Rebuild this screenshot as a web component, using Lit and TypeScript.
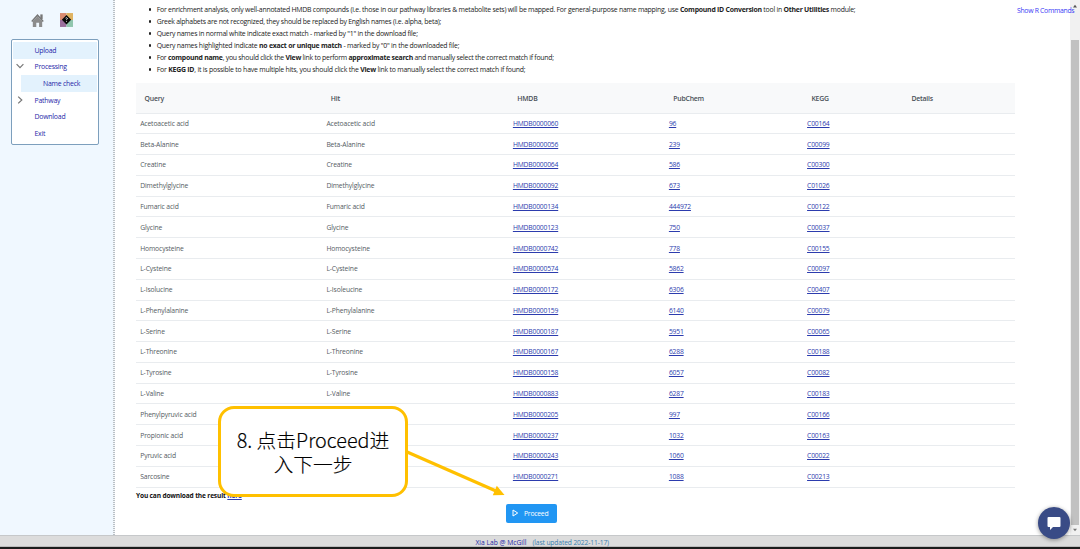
import { LitElement, html, css, svg } from 'lit';
import { customElement } from 'lit/decorators.js';

const ROWS: string[][] = [
  ['Acetoacetic acid', 'Acetoacetic acid', 'HMDB0000060', '96', 'C00164'],
  ['Beta-Alanine', 'Beta-Alanine', 'HMDB0000056', '239', 'C00099'],
  ['Creatine', 'Creatine', 'HMDB0000064', '586', 'C00300'],
  ['Dimethylglycine', 'Dimethylglycine', 'HMDB0000092', '673', 'C01026'],
  ['Fumaric acid', 'Fumaric acid', 'HMDB0000134', '444972', 'C00122'],
  ['Glycine', 'Glycine', 'HMDB0000123', '750', 'C00037'],
  ['Homocysteine', 'Homocysteine', 'HMDB0000742', '778', 'C00155'],
  ['L-Cysteine', 'L-Cysteine', 'HMDB0000574', '5862', 'C00097'],
  ['L-Isolucine', 'L-Isoleucine', 'HMDB0000172', '6306', 'C00407'],
  ['L-Phenylalanine', 'L-Phenylalanine', 'HMDB0000159', '6140', 'C00079'],
  ['L-Serine', 'L-Serine', 'HMDB0000187', '5951', 'C00065'],
  ['L-Threonine', 'L-Threonine', 'HMDB0000167', '6288', 'C00188'],
  ['L-Tyrosine', 'L-Tyrosine', 'HMDB0000158', '6057', 'C00082'],
  ['L-Valine', 'L-Valine', 'HMDB0000883', '6287', 'C00183'],
  ['Phenylpyruvic acid', 'Phenylpyruvic acid', 'HMDB0000205', '997', 'C00166'],
  ['Propionic acid', 'Propionic acid', 'HMDB0000237', '1032', 'C00163'],
  ['Pyruvic acid', 'Pyruvic acid', 'HMDB0000243', '1060', 'C00022'],
  ['Sarcosine', 'Sarcosine', 'HMDB0000271', '1088', 'C00213'],
];

const chevron = (d: string) =>
  html`<svg class="chev" viewBox="0 0 8 8">${svg`<path d=${d} fill="none" stroke="#777" stroke-width="1.2"/>`}</svg>`;

@customElement('side-nav')
class SideNav extends LitElement {
  static styles = css`
    :host { display: block; width: 113px; box-sizing: border-box; flex: none; background: #f0f8ff; }
    .icons { display: flex; gap: 15px; padding: 13px 0 0 30px; height: 26px; align-items: flex-start; }
    .icons svg { display: block; }
    .home { width: 15px; height: 15px; }
    .logo { width: 13px; height: 14px; }
    .menu { margin: 0 0 0 10.500px; width: 88px; height: 106px; box-sizing: border-box; border: 1px solid #7d9fbd; border-radius: 2px; background: #fff; padding: 2px 1px 0; }
    .item { height: 16.600px; display: flex; align-items: center; color: #2626a8; font-size: 6.900px; letter-spacing: -0.220px; }
    .slot { width: 22px; display: flex; flex: none; padding-left: 4px; box-sizing: border-box; }
    .chev { width: 8px; height: 8px; display: block; margin-left: -1px; margin-top: -1px; }
    .sel { background: #e3f2fd; }
    .sub { margin-left: 8px; }
    .sub .slot { width: 22.500px; }
  `;
  render() {
    return html`
      <div class="icons">
        <svg class="home" viewBox="0 0 15 16">
          <path d="M10.500 1.500h2.500v5h-2.500z" fill="#777" />
          <path d="M7.500 1L.8 8.400l1.100 1.100 5.600-5.800 5.600 5.800 1.100-1.100z" fill="#777" />
          <path d="M2.500 8.800L7.500 3.800l5 5V15H9.200v-4.500H6.200V15H2.500z" fill="#8c8c8c" />
        </svg>
        <svg class="logo" viewBox="0 0 14 15">
          <path d="M0 0h7v7.500H0z" fill="#d98b70" />
          <path d="M7 0h7v7.500H7z" fill="#dfb362" />
          <path d="M0 7.500h7V15H0z" fill="#9b6f9d" />
          <path d="M7 7.500h7V15H7z" fill="#90c6ae" />
          <path d="M7 2l5 5.200-5 5.200L2 7.200z" fill="#080808" />
          <path d="M6 5.500q1.200-1 1.800 0t-.8 1.600v.5M7 8.600v.8" fill="none" stroke="#fff" stroke-width=".9" />
        </svg>
      </div>
      <div class="menu">
        <div class="item sel"><span class="slot"></span>Upload</div>
        <div class="item"><span class="slot">${chevron('M.6 2.200L4 5.600 7.400 2.200')}</span>Processing</div>
        <div class="item sel sub"><span class="slot"></span>Name check</div>
        <div class="item"><span class="slot">${chevron('M2.200.6L5.800 4 2.200 7.400')}</span>Pathway</div>
        <div class="item"><span class="slot"></span>Download</div>
        <div class="item"><span class="slot"></span>Exit</div>
      </div>
    `;
  }
}

@customElement('result-table')
class ResultTable extends LitElement {
  static styles = css`
    :host { display: block; width: 879px; }
    .row { display: grid; grid-template-columns: 186.200px 186.500px 156px 138.200px 100px 1fr; align-items: center; height: 20.790px; box-sizing: border-box; border-bottom: 1px solid #e9ecef; color: #545b62; font-size: 6.750px; letter-spacing: -0.120px; }
    .row > * { padding-left: 4.200px; white-space: nowrap; }
    .head { height: 30.500px; background: #f8f9fa; font-weight: 600; color: #495057; font-size: 6.900px; padding-top: 2px; letter-spacing: -0.200px; }
    .head > * { padding-left: 8.500px; }
    a { color: #2c3cae; letter-spacing: -0.180px; text-decoration: underline; text-underline-offset: 1px; text-decoration-thickness: 1px; }
  `;
  render() {
    return html`
      <div class="row head">
        ${['Query', 'Hit', 'HMDB', 'PubChem', 'KEGG', 'Details'].map((h) => html`<span>${h}</span>`)}
      </div>
      ${ROWS.map(
        (r) => html`<div class="row">
          <span>${r[0]}</span><span>${r[1]}</span>
          ${r.slice(2).map((v) => html`<span><a>${v}</a></span>`)}
        </div>`,
      )}
    `;
  }
}

@customElement('app-root')
class AppRoot extends LitElement {
  static styles = css`
    :host { display: flex; flex-direction: column; position: relative; width: 1080px; height: 549px; overflow: hidden; background: #fff; font-family: 'Open Sans', 'Noto Sans', sans-serif; font-size: 7px; color: #222; }
    .body { display: flex; height: 535px; }
    .split { width: 2px; flex: none; background: repeating-linear-gradient(#b9c0c6 0 1px, #f4f7fa 1px 2px); }
    main { flex: 1; display: flex; flex-direction: column; padding-left: 21px; min-width: 0; }
    .top { display: flex; justify-content: space-between; height: 83px; }
    ul { margin: 0; padding: 3.500px 0 0 20.700px; list-style: none; }
    li { height: 12.020px; line-height: 12px; font-size: 6.900px; letter-spacing: -0.236px; white-space: nowrap; display: flex; align-items: center; }
    li:nth-child(4) { letter-spacing: -0.224px; }
    li:nth-child(5) { letter-spacing: -0.252px; }
    li:nth-child(6) { letter-spacing: -0.210px; }
    li::before { content: ''; width: 2.600px; height: 2.600px; border-radius: 50%; background: #222; margin-left: -8px; margin-right: 5.400px; flex: none; }
    .cmd { color: #3a3af5; font-size: 6.900px; letter-spacing: -0.320px; line-height: 12px; padding-top: 4.500px; width: 53px; white-space: nowrap; z-index: 1; }
    .dl { font-weight: 700; font-size: 6.600px; letter-spacing: -0.160px; line-height: 11px; margin-top: 2px; height: 12px; color: #111; }
    .dl a { color: #2c3cae; text-decoration: underline; }
    .btn { width: 51px; height: 19px; margin: 2px 0 0 370px; background: #2196f3; border-radius: 2px; display: flex; align-items: center; color: #fff; font-size: 6.800px; letter-spacing: -0.240px; box-sizing: border-box; padding-left: 6px; gap: 5px; }
    .btn svg { width: 7px; height: 8px; }
    .btn span { padding-top: 1px; }
    .scroll { width: 10px; flex: none; background: #f1f1f1; display: flex; flex-direction: column; align-items: center; }
    .scroll svg { width: 6px; height: 4px; display: block; }
    .up { margin-top: 4px; }
    .thumb { width: 8px; height: 485px; margin: 32px 0 3px; background: #c1c1c1; }
    footer { height: 12px; box-sizing: border-box; background: #dcdcdc; border-top: 1px solid #c6c8ca; border-bottom: 1px solid #bbb; display: flex; align-items: center; padding: 3px 0 0 475.500px; gap: 6px; color: #2424a4; font-size: 6.700px; white-space: nowrap; }
    .upd { color: #3a80b0; letter-spacing: -0.120px; }
    .edge { height: 2px; background: #1b1b1b; }
    .arrow { position: absolute; left: 400px; top: 445px; width: 110px; height: 55px; }
    .callout { position: absolute; left: 218px; top: 406px; width: 190px; height: 91px; box-sizing: border-box; border: 3px solid #ffc000; border-radius: 16px; background: #fff; color: #000; font: 300 19.800px/24px 'Noto Sans CJK SC', sans-serif; -webkit-text-stroke: 0.150px #000; text-align: center; padding-top: 19px; }
    .callout div { white-space: nowrap; }
    .chat { position: absolute; left: 1038px; top: 507px; width: 32px; height: 32px; border-radius: 50%; background: #394b86; box-shadow: 0 1px 4px #0006; display: flex; align-items: center; justify-content: center; }
    .chat svg { width: 14px; height: 14px; }
  `;
  render() {
    return html`
      <div class="body">
        <side-nav></side-nav>
        <div class="split"></div>
        <main>
          <div class="top">
            <ul>
              <li><span>For enrichment analysis, only well-annotated HMDB compounds (i.e. those in our pathway libraries &amp; metabolite sets) will be mapped. For general-purpose name mapping, use <b>Compound ID Conversion</b> tool in <b>Other Utilities</b> module;</span></li>
              <li><span>Greek alphabets are not recognized, they should be replaced by English names (i.e. alpha, beta);</span></li>
              <li><span>Query names in normal white indicate exact match - marked by "1" in the download file;</span></li>
              <li><span>Query names highlighted indicate <b>no exact or unique match</b> - marked by "0" in the downloaded file;</span></li>
              <li><span>For <b>compound name</b>, you should click the <b>View</b> link to perform <b>approximate search</b> and manually select the correct match if found;</span></li>
              <li><span>For <b>KEGG ID</b>, it is possible to have multiple hits, you should click the <b>View</b> link to manually select the correct match if found;</span></li>
            </ul>
            <div class="cmd">Show R Commands</div>
          </div>
          <result-table></result-table>
          <div class="dl">You can download the result <a>here</a></div>
          <div class="btn">
            <svg viewBox="0 0 7 8"><path d="M1 1l4.700 3L1 7z" fill="none" stroke="#fff" stroke-width="1" /></svg>
            <span>Proceed</span>
          </div>
        </main>
        <div class="scroll">
          <svg class="up" viewBox="0 0 6 4"><path d="M1 3.500L3 .8l2 2.700z" fill="#555" /></svg>
          <div class="thumb"></div>
          <svg viewBox="0 0 6 4"><path d="M1 .8h4L3 3.200z" fill="#777" /></svg>
        </div>
      </div>
      <footer><span>Xia Lab @ McGill</span><span class="upd">(last updated 2022-11-17)</span></footer>
      <div class="edge"></div>
      <svg class="arrow" viewBox="0 0 110 55">
        <path d="M6 6.500L96 46" stroke="#ffc000" stroke-width="3.200" />
        <path d="M104.500 50L92.800 50.200 96.800 40.800z" fill="#ffc000" />
      </svg>
      <div class="callout"><div>8. 点击Proceed进</div><div>入下一步</div></div>
      <div class="chat">
        <svg viewBox="0 0 14 14"><path d="M1.500 1h11a1 1 0 0 1 1 1v8a1 1 0 0 1-1 1H6l-3 3v-3H1.500a1 1 0 0 1-1-1V2a1 1 0 0 1 1-1z" fill="#fff" /></svg>
      </div>
    `;
  }
}
